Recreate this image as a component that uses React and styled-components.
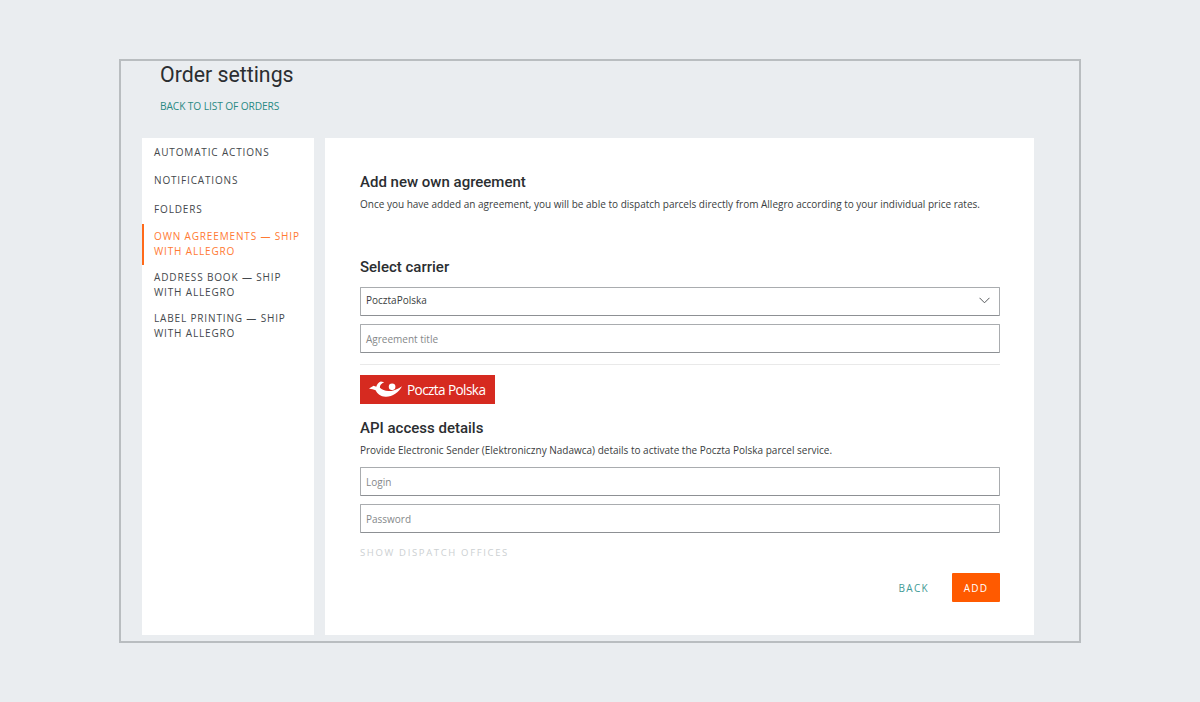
import React from "react";
import styled, { createGlobalStyle } from "styled-components";

const Global = createGlobalStyle`
  html, body { margin: 0; padding: 0; background: #eaedf0; }
  body { font-family: "Open Sans", "Liberation Sans", sans-serif; color: #333; }
  * { box-sizing: border-box; }
`;
const Page = styled.div`
  width: 1200px; height: 702px; padding: 59px 119px 59px; overflow: hidden;
`;
const Frame = styled.div`
  width: 962px; height: 584px; border: 2px solid #b9bdc0; padding: 0 45px 0 21px;
  display: flex; flex-direction: column; overflow: hidden;
`;
const Header = styled.header`
  padding-left: 18px; height: 77px; flex: none;
`;
const Title = styled.h1`
  margin: 0; font: 400 21.3px/28px Roboto, sans-serif; color: #2b2e31;
`;
const BackLink = styled.a`
  display: block; margin-top: 9px; font-size: 10.2px; line-height: 16px; color: #2a8a84;
  text-transform: uppercase; letter-spacing: -0.1px;
`;
const Columns = styled.div`
  display: flex; gap: 11px; height: 497px; flex: none;
`;
const Sidebar = styled.nav`
  width: 172px; background: #fff; padding-top: 7px; flex: none;
`;
const NavItem = styled.a`
  display: block; padding: ${p => p.$active ? "5px 8px 6px 10px" : "0 10px 0 12px"};
  margin-bottom: ${p => p.$mb}px; font-size: 10px; line-height: 15px; letter-spacing: 0.85px;
  text-transform: uppercase; color: ${p => p.$active ? "#ff7a33" : "#44484c"};
  border-left: ${p => p.$active ? "2px solid #ff6a1a" : "0"};
`;
const Main = styled.main`
  flex: 1; background: #fff; padding: 35px 34px 0 35px;
`;
const Heading = styled.h2`
  margin: ${p => p.$top || 0}px 0 0; font: 500 15px/18px Roboto, sans-serif; color: #2b2e31;
`;
const Description = styled.p`
  margin: ${p => p.$top}px 0 0; font-size: 10px; line-height: 15px; color: #3a3d40;
`;
const FieldBox = styled.div`
  height: 29px; margin-top: ${p => p.$top}px; border: 1px solid #a9acaf; border-bottom-color: #8d9094;
  border-radius: 1px; display: flex; align-items: center; justify-content: space-between;
  padding: 0 9px ${p => p.$raised ? 3 : 0}px 5px; font-size: 10px;
  color: ${p => p.$placeholder ? "#85888a" : "#3a3d40"};
`;
const Divider = styled.hr`
  border: 0; border-top: 1px solid #e9e9e9; margin: 11px 0 0;
`;
const Logo = styled.div`
  margin-top: 10px; width: 135px; height: 29px; background: #d62a20; display: flex; align-items: center;
  padding-left: 9px; gap: 5px; color: #fff; font: 400 13.6px/29px "Open Sans", sans-serif; letter-spacing: -0.6px;
`;
const OfficesLink = styled.a`
  display: block; margin-top: 12px; font-size: 9.5px; line-height: 15px; letter-spacing: 1.65px;
  color: #ccd0d2; text-transform: uppercase;
`;
const Actions = styled.div`
  margin-top: 13px; display: flex; justify-content: flex-end; align-items: center; gap: 23px;
`;
const BackButton = styled.a`
  font-size: 10px; letter-spacing: 1.3px; color: #3f9a95; text-transform: uppercase;
`;
const AddButton = styled.button`
  width: 48px; height: 29px; border: 0; border-radius: 1px; background: #ff5a00; color: #fff;
  font: 400 10px "Open Sans", sans-serif; letter-spacing: 1.2px; padding: 0;
`;

const Chevron = () => (
  <svg width="11" height="7" viewBox="0 0 11 7" fill="none" stroke="#55585b" strokeWidth="1">
    <path d="M0.5 0.8 L5.5 5.8 L10.5 0.8" />
  </svg>
);
const PostHorn = () => (
  <svg width="33" height="17" viewBox="0 0 100 50" fill="#fff">
    <path d="M0 22 L14 14 L22 17 C24 9 29 3 36 1 L46 3 C38 6 32 12 33 20 C45 32 70 36 100 15 C90 34 70 48 50 47 C35 46 25 38 20 27 C14 25 8 24 0 22 Z" />
    <circle cx="70" cy="17" r="10" />
  </svg>
);

export default function App() {
  return (
    <>
      <Global />
      <Page>
        <Frame>
          <Header>
            <Title>Order settings</Title>
            <BackLink>Back to list of orders</BackLink>
          </Header>
          <Columns>
            <Sidebar>
              <NavItem $mb={13}>Automatic actions</NavItem>
              <NavItem $mb={13.5}>Notifications</NavItem>
              <NavItem $mb={7.5}>Folders</NavItem>
              <NavItem $active $mb={4.5}>Own agreements — ship with Allegro</NavItem>
              <NavItem $mb={11}>Address book — ship with Allegro</NavItem>
              <NavItem $mb={0}>Label printing — ship with Allegro</NavItem>
            </Sidebar>
            <Main>
              <Heading>Add new own agreement</Heading>
              <Description $top={6}>Once you have added an agreement, you will be able to dispatch parcels directly from Allegro according to your individual price rates.</Description>
              <Heading $top={46}>Select carrier</Heading>
              <FieldBox $top={11} $raised>PocztaPolska<Chevron /></FieldBox>
              <FieldBox $top={8} $placeholder>Agreement title</FieldBox>
              <Divider />
              <Logo><PostHorn />Poczta Polska</Logo>
              <Heading $top={15}>API access details</Heading>
              <Description $top={6}>Provide Electronic Sender (Elektroniczny Nadawca) details to activate the Poczta Polska parcel service.</Description>
              <FieldBox $top={9} $placeholder>Login</FieldBox>
              <FieldBox $top={8} $placeholder>Password</FieldBox>
              <OfficesLink>Show dispatch offices</OfficesLink>
              <Actions>
                <BackButton>Back</BackButton>
                <AddButton>ADD</AddButton>
              </Actions>
            </Main>
          </Columns>
        </Frame>
      </Page>
    </>
  );
}
